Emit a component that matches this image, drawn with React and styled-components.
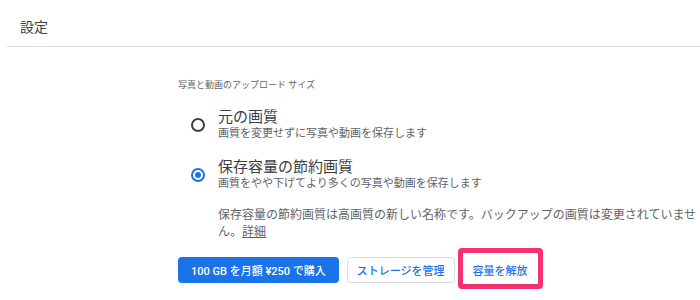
import styled, { createGlobalStyle } from 'styled-components'

const GlobalStyle = createGlobalStyle`
  body {
    margin: 0;
    background: #fff;
    font-family: Roboto, "Noto Sans CJK JP", sans-serif;
    -webkit-font-smoothing: antialiased;
  }
`

const Page = styled.div`
  width: 700px;
  height: 300px;
  overflow: hidden;
  background: #fff;
`

const Header = styled.div`
  margin-left: 7px;
  height: 47px;
  box-sizing: border-box;
  padding: 16px 0 0 13px;
  border-bottom: 1px solid #e0e0e0;
  font-size: 14px;
  color: #3c4043;
`

const Content = styled.div`
  padding: 32px 0 0 178px;
  width: 500px;
`

const Caption = styled.div`
  font-size: 9px;
  color: #5f6368;
  line-height: 12px;
`

const Options = styled.div`
  display: flex;
  flex-direction: column;
  gap: 16px;
  margin-top: 17px;
`

const Option = styled.label`
  display: flex;
  align-items: center;
`

const RadioCell = styled.div`
  width: 40px;
  display: flex;
  justify-content: center;
`

const Radio = styled.span`
  width: 14px;
  height: 14px;
  box-sizing: border-box;
  border-radius: 50%;
  border: 2px solid ${p => (p.checked ? '#1a73e8' : '#3c4043')};
  display: flex;
  align-items: center;
  justify-content: center;

  &::after {
    content: '';
    width: 6px;
    height: 6px;
    border-radius: 50%;
    background: ${p => (p.checked ? '#1a73e8' : 'transparent')};
  }
`

const Texts = styled.div`
  display: flex;
  flex-direction: column;
`

const Title = styled.div`
  font-size: 15px;
  line-height: 18px;
  color: #3c4043;
`

const Desc = styled.div`
  font-size: 11px;
  line-height: 16px;
  color: #5f6368;
`

const Note = styled.p`
  margin: 15px 0 0 40px;
  font-size: 12px;
  line-height: 17px;
  color: #5f6368;
  width: 482px;
`

const More = styled.a`
  color: #5f6368;
  text-decoration: underline;
`

const Actions = styled.div`
  display: flex;
  gap: 8px;
  margin-top: 16px;
`

const Button = styled.button`
  height: 26px;
  padding: 0 ${p => (p.variant === 'primary' ? '12px' : '9px')};
  border-radius: 4px;
  font-family: Roboto, "Noto Sans CJK JP", sans-serif;
  font-size: 11px;
  font-weight: 500;
  cursor: pointer;
  border: 1px solid ${p => (p.variant === 'outline' ? '#dadce0' : 'transparent')};
  background: ${p => (p.variant === 'primary' ? '#1a73e8' : '#fff')};
  color: ${p => (p.variant === 'primary' ? '#fff' : '#1a73e8')};
`

const Highlight = styled.div`
  position: relative;
  display: flex;

  &::after {
    content: '';
    position: absolute;
    top: -9px;
    left: -5px;
    right: -5px;
    bottom: -6px;
    border: 5px solid #f2336f;
    border-radius: 4px;
    pointer-events: none;
  }
`

export default function App() {
  return (
    <Page>
      <GlobalStyle />
      <Header>設定</Header>
      <Content>
        <Caption>写真と動画のアップロード サイズ</Caption>
        <Options>
          <Option>
            <RadioCell>
              <Radio />
            </RadioCell>
            <Texts>
              <Title>元の画質</Title>
              <Desc>画質を変更せずに写真や動画を保存します</Desc>
            </Texts>
          </Option>
          <Option>
            <RadioCell>
              <Radio checked />
            </RadioCell>
            <Texts>
              <Title>保存容量の節約画質</Title>
              <Desc>画質をやや下げてより多くの写真や動画を保存します</Desc>
            </Texts>
          </Option>
        </Options>
        <Note>
          保存容量の節約画質は高画質の新しい名称です。バックアップの画質は変更されていません。<More>詳細</More>
        </Note>
        <Actions>
          <Button variant="primary">100 GB を月額 ¥250 で購入</Button>
          <Button variant="outline">ストレージを管理</Button>
          <Highlight>
            <Button variant="text">容量を解放</Button>
          </Highlight>
        </Actions>
      </Content>
    </Page>
  )
}
